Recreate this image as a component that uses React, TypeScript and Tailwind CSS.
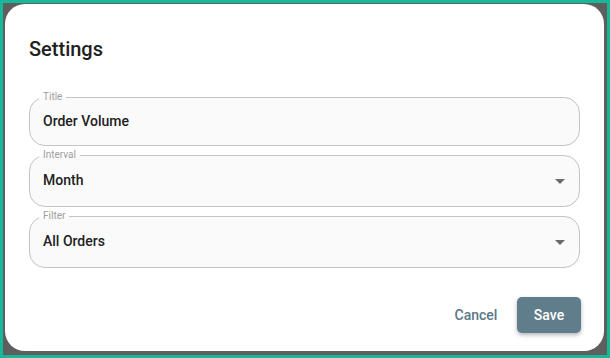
import { useState } from "react";

interface FieldProps {
  label: string;
  value: string;
  select?: boolean;
  tall?: boolean;
}

function OutlinedField({ label, value, select, tall }: FieldProps) {
  return (
    <fieldset
      className={`relative rounded-[16px] border border-[#c4c4c4] bg-[#fafafa] px-[13px] m-0 min-w-0 ${
        tall ? "h-[58px]" : "h-[55px]"
      }`}
    >
      <legend className="-ml-[4px] px-[4px] text-[10px] leading-[12px] text-[#9e9e9e]">{label}</legend>
      <div className={`flex items-center justify-between -mt-[3px] ${tall ? "h-[45px]" : "h-[42px]"}`}>
        <span className="text-[14px] text-[#212121]" style={{ fontWeight: 500 }}>
          {value}
        </span>
        {select && (
          <svg viewBox="0 0 24 24" className="-mr-[6px] mt-[1px] w-6 h-6 fill-[#6b6b6b]">
            <path d="M7 10l5 5 5-5z" />
          </svg>
        )}
      </div>
    </fieldset>
  );
}

export default function App() {
  const [title] = useState("Order Volume");

  return (
    <div
      className="w-[610px] h-[358px] bg-[#17b897] p-[3px]"
      style={{ fontFamily: "Roboto, 'Liberation Sans', sans-serif" }}
    >
      <div className="h-full bg-[#5e5e5e] pl-[2px] pt-[1px] pr-[3px] pb-[4px]">
        <div className="h-full bg-white rounded-[20px] flex flex-col">
          <h2 className="px-[24px] pt-[29px] text-[20px] leading-[32px] text-[#212121]" style={{ fontWeight: 500 }}>
            Settings
          </h2>
          <div className="px-[24px] mt-[26px] flex flex-col gap-[3px]">
            <OutlinedField label="Title" value={title} />
            <OutlinedField label="Interval" value="Month" select tall />
            <OutlinedField label="Filter" value="All Orders" select tall />
          </div>
          <div className="mt-auto pb-[18px] pr-[23px] flex justify-end items-center gap-[9px]">
            <button
              type="button"
              className="h-[36px] w-[64px] rounded-[4px] text-[14px] text-[#5b7786]"
              style={{ fontWeight: 500 }}
            >
              Cancel
            </button>
            <button
              type="button"
              className="h-[36px] w-[64px] rounded-[5px] bg-[#607d8b] text-[14px] text-white shadow-[0_2px_4px_rgba(0,0,0,0.3)]"
              style={{ fontWeight: 500 }}
            >
              Save
            </button>
          </div>
        </div>
      </div>
    </div>
  );
}
